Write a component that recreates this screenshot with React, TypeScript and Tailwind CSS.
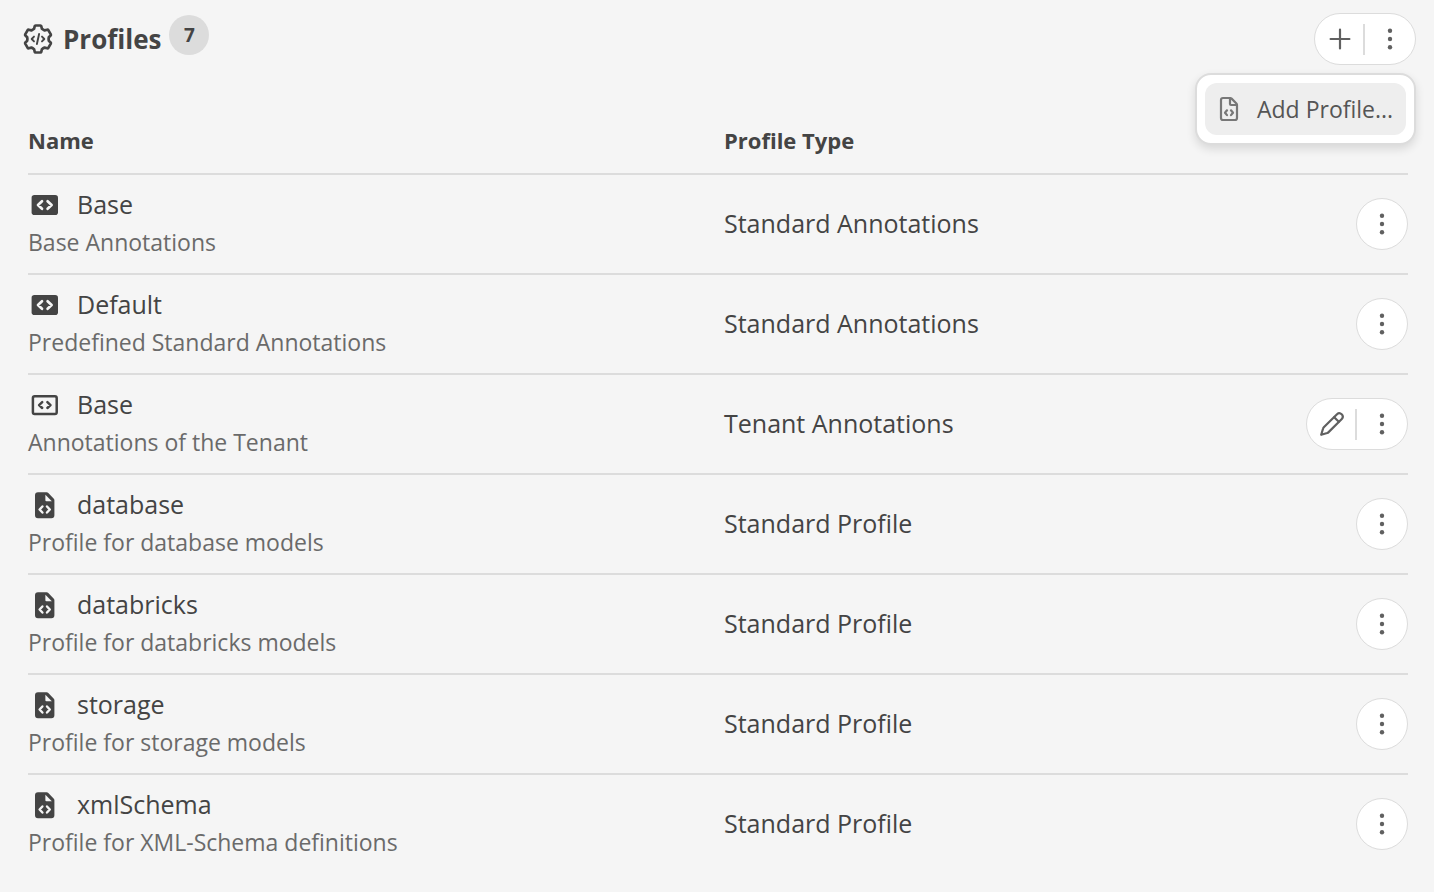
import type { ReactNode } from 'react';

type IconKind = 'solid' | 'outline' | 'file';

interface Profile {
  name: string;
  description: string;
  type: string;
  icon: IconKind;
  editable?: boolean;
}

const profiles: Profile[] = [
  { name: 'Base', description: 'Base Annotations', type: 'Standard Annotations', icon: 'solid' },
  { name: 'Default', description: 'Predefined Standard Annotations', type: 'Standard Annotations', icon: 'solid' },
  { name: 'Base', description: 'Annotations of the Tenant', type: 'Tenant Annotations', icon: 'outline', editable: true },
  { name: 'database', description: 'Profile for database models', type: 'Standard Profile', icon: 'file' },
  { name: 'databricks', description: 'Profile for databricks models', type: 'Standard Profile', icon: 'file' },
  { name: 'storage', description: 'Profile for storage models', type: 'Standard Profile', icon: 'file' },
  { name: 'xmlSchema', description: 'Profile for XML-Schema definitions', type: 'Standard Profile', icon: 'file' },
];

function GearCodeIcon() {
  return (
    <svg width="30" height="30" viewBox="-15 -15 30 30" fill="none" stroke="currentColor" strokeLinecap="round" strokeLinejoin="round" aria-hidden="true">
      <path
        strokeWidth="2.7"
        d="M-2.4 -13.5H2.4Q3.1 -13.5 3.3 -12.8L3.9 -10.3Q5.2 -9.2 6.6 -8.6L9.2 -9.3Q9.9 -9.5 10.3 -8.9L12.8 -4.6Q13.1 -4 12.6 -3.5L10.8 -1.7Q10.4 0 10.8 1.7L12.6 3.5Q13.1 4 12.8 4.6L10.3 8.9Q9.9 9.5 9.2 9.3L6.6 8.6Q5.2 9.2 3.9 10.3L3.3 12.8Q3.1 13.5 2.4 13.5H-2.4Q-3.1 13.5 -3.3 12.8L-3.9 10.3Q-5.2 9.2 -6.6 8.6L-9.2 9.3Q-9.9 9.5 -10.3 8.9L-12.8 4.6Q-13.1 4 -12.6 3.5L-10.8 1.7Q-10.4 0 -10.8 -1.7L-12.6 -3.5Q-13.1 -4 -12.8 -4.6L-10.3 -8.9Q-9.9 -9.5 -9.2 -9.3L-6.6 -8.6Q-5.2 -9.2 -3.9 -10.3L-3.3 -12.8Q-3.1 -13.5 -2.4 -13.5Z"
      />
      <path strokeWidth="1.9" d="M-4 -2.4L-6.3 0L-4 2.4M4 -2.4L6.3 0L4 2.4M1.1 -5L-1.1 5" />
    </svg>
  );
}

function RowIcon({ kind }: { kind: IconKind }) {
  return (
    <svg width="32" height="32" viewBox="0 -1 32 32" fill="none" strokeLinecap="round" strokeLinejoin="round" aria-hidden="true">
      {kind === 'solid' && (
        <>
          <rect x="3.6" y="6" width="26.4" height="20" rx="2.8" fill="#444444" />
          <path d="M14 12.2L10 16L14 19.8M19.6 12.2L23.6 16L19.6 19.8" stroke="#f5f5f5" strokeWidth="2.7" />
        </>
      )}
      {kind === 'outline' && (
        <>
          <rect x="4.9" y="7.2" width="23.8" height="17.8" rx="1.8" stroke="#444444" strokeWidth="2.5" />
          <path d="M14.2 13.2L11.1 16.1L14.2 19M19.4 13.2L22.5 16.1L19.4 19" stroke="#444444" strokeWidth="2.5" />
        </>
      )}
      {kind === 'file' && (
        <>
          <path d="M10 3.2H18.6Q19.6 3.2 20.3 3.9L25.6 9.4Q26.4 10.2 26.4 11.2V26.2Q26.4 29.2 23.4 29.2H10Q7 29.2 7 26.2V6.2Q7 3.2 10 3.2Z" fill="#444444" />
          <path d="M17.4 5.8L23.8 12.2H18.4Q17.4 12.2 17.4 11.2Z" fill="#f5f5f5" />
          <path d="M14.4 17.5L11.6 20.5L14.4 23.5M19 17.5L21.8 20.5L19 23.5" stroke="#f5f5f5" strokeWidth="2.4" />
        </>
      )}
    </svg>
  );
}

function FileCodeIcon() {
  return (
    <svg width="20" height="26" viewBox="0 0 20 26" fill="none" stroke="#777777" strokeWidth="2.2" strokeLinecap="round" strokeLinejoin="round" aria-hidden="true">
      <path d="M4 2H11.2Q12 2 12.6 2.6L17.4 7.6Q18 8.2 18 9V22Q18 24 16 24H4Q2 24 2 22V4Q2 2 4 2Z" />
      <path d="M11 2.4V8Q11 9 12 9H17.6" />
      <path d="M8 14.3L6 16.7L8 19.1M12 14.3L14 16.7L12 19.1" />
    </svg>
  );
}

function PlusIcon() {
  return (
    <svg width="22" height="22" viewBox="0 0 22 22" stroke="#606060" strokeWidth="2.2" strokeLinecap="round" aria-hidden="true">
      <path d="M11 1.6V20.4M1.6 11H20.4" />
    </svg>
  );
}

function PencilIcon() {
  return (
    <svg width="24" height="24" viewBox="0 0 24 24" fill="none" stroke="#606060" strokeWidth="2.2" strokeLinecap="round" strokeLinejoin="round" aria-hidden="true">
      <path d="M1.2 22.8L3 16.7Q3.2 15.9 3.8 15.3L17 2.2A3.4 3.4 0 0 1 21.8 7L8.6 20.1Q8 20.7 7.2 21Z" />
      <path d="M14.2 5.2L18.8 9.8" />
    </svg>
  );
}

function DotsIcon() {
  return (
    <svg width="6" height="24" viewBox="0 0 6 24" fill="#606060" aria-hidden="true">
      <circle cx="3" cy="3.8" r="2.2" />
      <circle cx="3" cy="12" r="2.2" />
      <circle cx="3" cy="20.2" r="2.2" />
    </svg>
  );
}

function IconButton({ label, className = 'flex-1', children }: { label: string; className?: string; children: ReactNode }) {
  return (
    <button type="button" aria-label={label} className={`flex h-full cursor-pointer items-center justify-center ${className}`}>
      {children}
    </button>
  );
}

function SplitActions({ label, icon }: { label: string; icon: ReactNode }) {
  return (
    <div className="flex h-[52px] w-[102px] items-center rounded-full border border-[#dcdcdc] bg-white">
      <IconButton label={label} className="w-12 pl-0.5">{icon}</IconButton>
      <span className="h-[31px] w-0.5 bg-[#dcdcdc]" />
      <IconButton label="More actions"><DotsIcon /></IconButton>
    </div>
  );
}

export default function App() {
  return (
    <main className="min-h-screen bg-[#f5f5f5] pt-[13px] font-['Open_Sans','Noto_Sans',sans-serif] text-[#444444]">
      <header className="flex items-start justify-between pr-[18px] pl-[23px]">
        <div className="flex items-start">
          <div className="flex h-[52px] items-center gap-2.5">
            <GearCodeIcon />
            <h1 className="text-[26px] leading-9 font-bold">Profiles</h1>
          </div>
          <span className="mt-0.5 ml-2 flex size-10 items-center justify-center rounded-full bg-[#dcdcdc] text-[19px] leading-6 font-bold">7</span>
        </div>
        <div className="relative">
          <SplitActions label="Add" icon={<PlusIcon />} />
          <div role="menu" className="absolute top-[60px] right-0 w-[221px] rounded-2xl border-2 border-[#dcdcdc] bg-white p-2 shadow-[0_4px_10px_rgba(0,0,0,0.12)]">
            <button type="button" role="menuitem" className="flex h-[52px] w-full cursor-pointer items-center gap-[18px] rounded-xl bg-[#eeeeee] pl-3.5 text-[23px] leading-8 whitespace-nowrap text-[#555555]">
              <FileCodeIcon />
              Add Profile...
            </button>
          </div>
        </div>
      </header>

      <div className="pt-[45px] pr-[26px] pl-7">
        <table className="w-full table-fixed border-separate border-spacing-0 text-left">
          <thead>
            <tr className="text-[22px] leading-8">
              <th scope="col" className="w-1/2 border-b-2 border-[#dcdcdc] pt-3.5 pb-[17px] font-bold">Name</th>
              <th scope="col" className="border-b-2 border-[#dcdcdc] pt-3.5 pb-[17px] pl-1.5 font-bold">Profile Type</th>
              <th className="w-[102px] border-b-2 border-[#dcdcdc]" aria-label="Actions" />
            </tr>
          </thead>
          <tbody className="[&>tr:last-child>td]:border-transparent">
            {profiles.map((profile, index) => (
              <tr key={index}>
                <td className="border-b-2 border-[#dcdcdc] pt-2.5 pb-3">
                  <div className="flex items-center gap-[17px] text-[25px] leading-[38px]">
                    <RowIcon kind={profile.icon} />
                    {profile.name}
                  </div>
                  <div className="text-[23px] leading-[38px] text-[#6a6a6a]">{profile.description}</div>
                </td>
                <td className="border-b-2 border-[#dcdcdc] pb-0.5 pl-1.5 text-[25px] leading-[38px]">{profile.type}</td>
                <td className="border-b-2 border-[#dcdcdc]">
                  <div className="flex justify-end">
                    {profile.editable ? (
                      <SplitActions label="Edit" icon={<PencilIcon />} />
                    ) : (
                      <div className="flex size-[52px] rounded-full border border-[#dcdcdc] bg-white">
                        <IconButton label="More actions"><DotsIcon /></IconButton>
                      </div>
                    )}
                  </div>
                </td>
              </tr>
            ))}
          </tbody>
        </table>
      </div>
    </main>
  );
}
